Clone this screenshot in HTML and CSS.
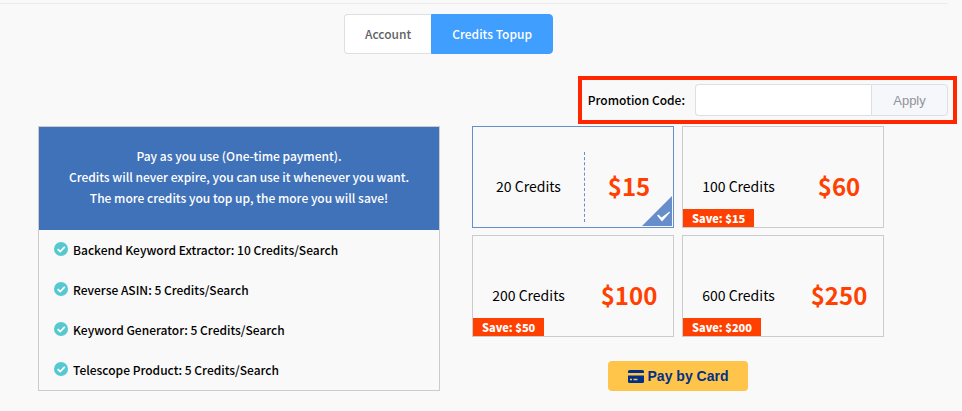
FILE: index.html
```html
<!DOCTYPE html>
<html lang="en">
<head>
    <meta charset="UTF-8">
    <meta name="viewport" content="width=device-width, initial-scale=1.0">
    <title>Credits Topup</title>
    <link rel="stylesheet" href="styles.css">
</head>
<body>

<svg class="sprite" aria-hidden="true">
    <symbol id="check-circle" viewBox="0 0 14 14">
        <circle cx="7" cy="7" r="7" fill="#56c9d0"/>
        <path d="M3.6 7.1 6.2 9.6 10.8 4.8" fill="none" stroke="#fff" stroke-width="1.8"/>
    </symbol>
</svg>

<hr class="divider">

<nav class="tabs">
    <button type="button" class="tab">Account</button>
    <button type="button" class="tab active">Credits Topup</button>
</nav>

<form class="topup">
    <div class="promo">
        <label for="promoCode">Promotion Code:</label>
        <div class="promo-group">
            <input type="text" id="promoCode" class="promo-input">
            <button type="button" class="promo-apply">Apply</button>
        </div>
    </div>

    <div class="content">
        <section class="info">
            <div class="info-header">
                <p>Pay as you use (One-time payment).</p>
                <p>Credits will never expire, you can use it whenever you want.</p>
                <p>The more credits you top up, the more you will save!</p>
            </div>
            <ul class="info-list">
                <li><svg class="check"><use href="#check-circle"/></svg>Backend Keyword Extractor: 10 Credits/Search</li>
                <li><svg class="check"><use href="#check-circle"/></svg>Reverse ASIN: 5 Credits/Search</li>
                <li><svg class="check"><use href="#check-circle"/></svg>Keyword Generator: 5 Credits/Search</li>
                <li><svg class="check"><use href="#check-circle"/></svg>Telescope Product: 5 Credits/Search</li>
            </ul>
        </section>

        <section class="plans">
            <div class="plan-grid">
                <label class="plan">
                    <input type="radio" name="plan" class="plan-radio" checked>
                    <span class="plan-credits">20 Credits</span>
                    <span class="plan-price">$15</span>
                    <svg class="corner" viewBox="0 0 30 30">
                        <path d="M30 0V30H0Z" fill="#658ecb"/>
                        <path d="M15 19.5 16.5 18.5 19.5 21.5 27.5 15.5 28 16.5 20 25.5Z" fill="#fff"/>
                    </svg>
                </label>
                <label class="plan">
                    <input type="radio" name="plan" class="plan-radio">
                    <span class="plan-credits">100 Credits</span>
                    <span class="plan-price">$60</span>
                    <span class="save">Save: $15</span>
                </label>
                <label class="plan">
                    <input type="radio" name="plan" class="plan-radio">
                    <span class="plan-credits">200 Credits</span>
                    <span class="plan-price">$100</span>
                    <span class="save">Save: $50</span>
                </label>
                <label class="plan">
                    <input type="radio" name="plan" class="plan-radio">
                    <span class="plan-credits">600 Credits</span>
                    <span class="plan-price">$250</span>
                    <span class="save">Save: $200</span>
                </label>
            </div>
            <button type="button" class="pay">
                <svg class="pay-icon" viewBox="0 0 16 13">
                    <path d="M1.5 0h13A1.5 1.5 0 0 1 16 1.5V3H0V1.5A1.5 1.5 0 0 1 1.5 0Z" fill="#003087"/>
                    <path d="M0 5.5H16V11.5A1.5 1.5 0 0 1 14.5 13H1.5A1.5 1.5 0 0 1 0 11.5Z" fill="#003087"/>
                    <path d="M2 9.5H4M5.5 9.5H9.5" stroke="#ffc44a" stroke-width="1.4"/>
                </svg>
                Pay by Card
            </button>
        </section>
    </div>
</form>

</body>
</html>
```
FILE: styles.css
```css
* {
    box-sizing: border-box;
}
body {
    margin: 0;
    background-color: #f9f9f9;
    color: #000;
    font-family: "Noto Sans CJK SC", sans-serif;
    font-size: 12px;
    font-weight: 500;
}
.sprite {
    display: none;
}
.divider {
    margin: 3px 14px 10px 0;
    border: 0;
    border-top: 1px solid #ebebeb;
}
.tabs {
    display: flex;
    justify-content: center;
    padding-right: 65px;
}
.tab {
    height: 40px;
    padding: 0 20px 2px;
    border: 1px solid #dcdfe6;
    background-color: #fff;
    color: #606266;
    font: inherit;
}
.tab:first-child {
    border-right: 0;
    border-radius: 4px 0 0 4px;
}
.tab:last-child {
    border-radius: 0 4px 4px 0;
}
.tab.active {
    border-color: #409eff;
    background-color: #409eff;
    color: #fff;
}
.topup {
    display: flex;
    flex-direction: column;
    margin-top: 22px;
}
.promo {
    display: flex;
    align-items: center;
    align-self: flex-end;
    gap: 10px;
    height: 48px;
    margin-right: 5px;
    padding: 0 5px 0 6px;
    border: 4px solid #ff2600;
}
.promo label {
    padding-bottom: 2px;
}
.promo-group {
    display: flex;
    height: 32px;
}
.promo-input {
    width: 176px;
    padding: 0 15px;
    border: 1px solid #dcdfe6;
    border-right: 0;
    border-radius: 4px 0 0 4px;
    background-color: #fff;
    font: inherit;
}
.promo-apply {
    width: 77px;
    padding: 0;
    border: 1px solid #dcdfe6;
    border-radius: 0 4px 4px 0;
    background-color: #f5f7fa;
    color: #909399;
    font: 13px "Liberation Sans", Arial, sans-serif;
}
.content {
    display: grid;
    grid-template-columns: 402fr 412fr;
    align-items: start;
    gap: 32px;
    padding: 2px 78px 0 38px;
}
.info {
    border: 1px solid #ccc;
}
.info-header {
    padding: 18px 10px 22px;
    background-color: #4072b9;
    color: #fff;
    line-height: 21px;
    text-align: center;
}
.info-header p {
    margin: 0;
}
.info-list {
    margin: 0;
    padding: 0 15px;
    list-style: none;
}
.info-list li {
    display: flex;
    align-items: center;
    gap: 5px;
    height: 40px;
    padding-bottom: 2px;
}
.check {
    width: 14px;
    height: 14px;
}
.plans {
    display: flex;
    flex-direction: column;
    align-items: center;
}
.plan-grid {
    display: grid;
    grid-template-columns: 1fr 1fr;
    gap: 7px 8px;
    width: 100%;
}
.plan {
    position: relative;
    display: grid;
    grid-template-columns: 112fr 88fr;
    height: 102px;
    padding: 25px 0 5px;
    border: 1px solid #ccc;
    line-height: 68px;
    text-align: center;
    cursor: pointer;
}
.plan:has(:checked) {
    border-color: #658ecb;
}
.plan-radio {
    position: absolute;
    margin: 0;
    opacity: 0;
}
.plan-credits {
    border-right: 1px solid transparent;
    font-size: 14px;
    font-weight: 400;
}
.plan-radio:checked + .plan-credits {
    border-right: 1px dashed #658ecb;
}
.plan-price {
    color: #ff4000;
    font-size: 24px;
    font-weight: 700;
}
.corner {
    position: absolute;
    right: 1px;
    bottom: 1px;
    width: 30px;
    height: 30px;
}
.save {
    position: absolute;
    left: 0;
    bottom: 0;
    padding: 0 9px;
    background-color: #ff4000;
    color: #fff;
    font-size: 11px;
    font-weight: 900;
    line-height: 18px;
}
.pay {
    display: flex;
    align-items: center;
    justify-content: center;
    gap: 4px;
    width: 140px;
    height: 30px;
    margin-top: 24px;
    padding: 0;
    border: 0;
    border-radius: 4px;
    background-color: #ffc44a;
    color: #003087;
    font: bold 14px "Liberation Sans", Arial, sans-serif;
}
.pay-icon {
    width: 16px;
    height: 13px;
}
```
